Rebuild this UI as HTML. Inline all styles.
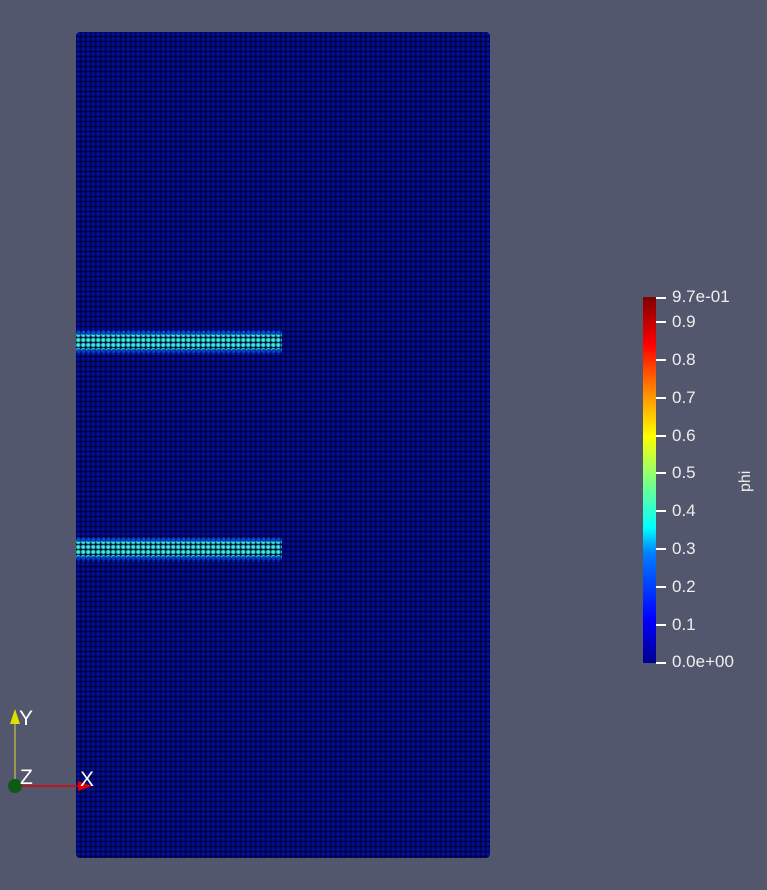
<!DOCTYPE html>
<html><head><style>
body{margin:0;width:767px;height:890px;background:#52576e;position:relative;overflow:hidden;font-family:"Liberation Sans",sans-serif;}
.grid{position:absolute;left:76px;top:32px;width:414px;height:826px;border-radius:4px;
background-color:#000030;
background-image:radial-gradient(circle at 45% 40%,#0814a0 0,#000c90 1.3px,#000a78 2.1px,rgba(0,0,50,0) 2.7px);
background-size:5px 5px;}
.band{position:absolute;left:76px;width:206px;height:18px;
background-image:radial-gradient(circle at 45% 40%,#7ff0d0 0,#30e0c0 1.3px,#10a0a0 2.1px,rgba(0,0,60,0) 2.7px),linear-gradient(#00004a,#00004a);
background-size:5px 5px,100% 100%;}
.band:before{content:"";position:absolute;left:0;right:0;top:-3px;height:5px;background-image:radial-gradient(circle,#1060e0 0,#0030c0 2px,rgba(0,0,0,0) 2.6px);background-size:5px 5px;}
.band:after{content:"";position:absolute;left:0;right:0;bottom:-4px;height:6px;background-image:radial-gradient(circle,#0850d8 0,#0028b8 2px,rgba(0,0,0,0) 2.6px);background-size:5px 5px;}
.cb{position:absolute;left:643px;top:297px;width:13px;height:366px;
background:linear-gradient(to top,#00008f 0%,#0000ff 12%,#0080ff 30%,#00ffff 37%,#80ff80 50%,#ffff00 62%,#ff8000 75%,#ff0000 87%,#800000 100%);}
.t{position:absolute;left:656px;width:10px;height:2px;background:#fff;}
.l{position:absolute;left:672px;color:#eee;font-size:17px;line-height:16px;}
</style></head><body>
<div class="grid"></div>
<div class="band" style="top:333px"></div>
<div class="band" style="top:540px"></div>
<div class="cb"></div>
<div class="t" style="top:297px"></div><div class="l" style="top:289px">9.7e-01</div>
<div class="t" style="top:321px"></div><div class="l" style="top:314px">0.9</div>
<div class="t" style="top:359px"></div><div class="l" style="top:352px">0.8</div>
<div class="t" style="top:397px"></div><div class="l" style="top:390px">0.7</div>
<div class="t" style="top:435px"></div><div class="l" style="top:428px">0.6</div>
<div class="t" style="top:472px"></div><div class="l" style="top:465px">0.5</div>
<div class="t" style="top:510px"></div><div class="l" style="top:503px">0.4</div>
<div class="t" style="top:548px"></div><div class="l" style="top:541px">0.3</div>
<div class="t" style="top:586px"></div><div class="l" style="top:579px">0.2</div>
<div class="t" style="top:624px"></div><div class="l" style="top:617px">0.1</div>
<div class="t" style="top:662px"></div><div class="l" style="top:654px">0.0e+00</div>
<div style="position:absolute;left:737px;top:492px;transform:rotate(-90deg);transform-origin:0 0;color:#eee;font-size:16px;">phi</div>
<svg style="position:absolute;left:0;top:700px" width="110" height="100">
<line x1="15" y1="86" x2="15" y2="20" stroke="#dada30" stroke-width="1"/>
<polygon points="15,9 10,24 20,24" fill="#e0e000"/>
<line x1="15" y1="86" x2="82" y2="86" stroke="#e00000" stroke-width="1.5"/>
<polygon points="92,86 78,81 78,91" fill="#e00000"/>
<circle cx="15" cy="86" r="7" fill="#0c5a14"/>
<text x="19" y="25" fill="#fff" font-size="21" font-family="Liberation Sans">Y</text>
<text x="20" y="84" fill="#fff" font-size="21" font-family="Liberation Sans">Z</text>
<text x="80" y="86" fill="#fff" font-size="21" font-family="Liberation Sans">X</text>
</svg>
</body></html>
